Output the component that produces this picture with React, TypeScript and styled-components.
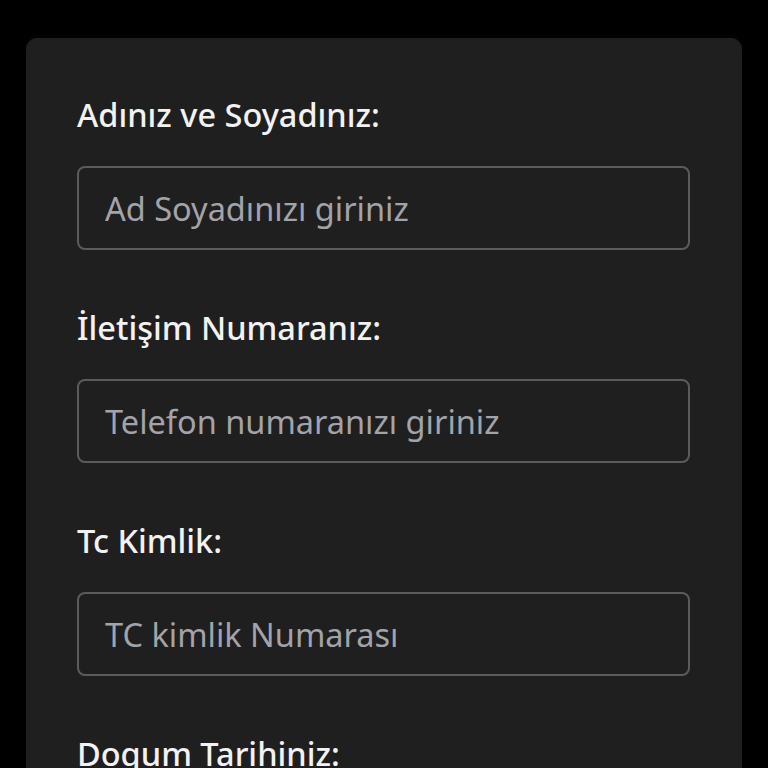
import React from "react";
import styled, { createGlobalStyle } from "styled-components";

const Global = createGlobalStyle`
  html, body { margin: 0; padding: 0; background: #000; }
  body { font-family: "Noto Sans", "Open Sans", sans-serif; }
`;

const Page = styled.div`
  background: #000;
  padding: 38px 26px 0 26px;
  box-sizing: border-box;
  overflow: hidden;
  height: 768px;
`;

const Card = styled.form`
  background: #1f1f1f;
  border-radius: 11px;
  padding: 57px 52px 40px 51px;
  display: flex;
  flex-direction: column;
  gap: 58px;
`;

const Field = styled.div`
  display: flex;
  flex-direction: column;
  gap: 31px;
`;

const Label = styled.label`
  color: #f2f2f2;
  font-size: 32.5px;
  line-height: 40px;
  font-weight: 500;
`;

const Input = styled.input`
  box-sizing: border-box;
  height: 84px;
  width: 100%;
  background: #1f1f1f;
  border: 2px solid #5b5b5b;
  border-radius: 8px;
  padding: 0 26px;
  font-family: inherit;
  font-size: 32.5px;
  color: #eee;
  outline: none;
  &::placeholder { color: #a3a3aa; }
`;

const fields = [
  { label: "Adınız ve Soyadınız:", placeholder: "Ad Soyadınızı giriniz" },
  { label: "İletişim Numaranız:", placeholder: "Telefon numaranızı giriniz" },
  { label: "Tc Kimlik:", placeholder: "TC kimlik Numarası" },
  { label: "Dogum Tarihiniz:", placeholder: "Doğum tarihinizi giriniz" },
];

export default function App() {
  return (
    <>
      <Global />
      <Page>
        <Card>
          {fields.map((f) => (
            <Field key={f.label}>
              <Label>{f.label}</Label>
              <Input placeholder={f.placeholder} />
            </Field>
          ))}
        </Card>
      </Page>
    </>
  );
}
